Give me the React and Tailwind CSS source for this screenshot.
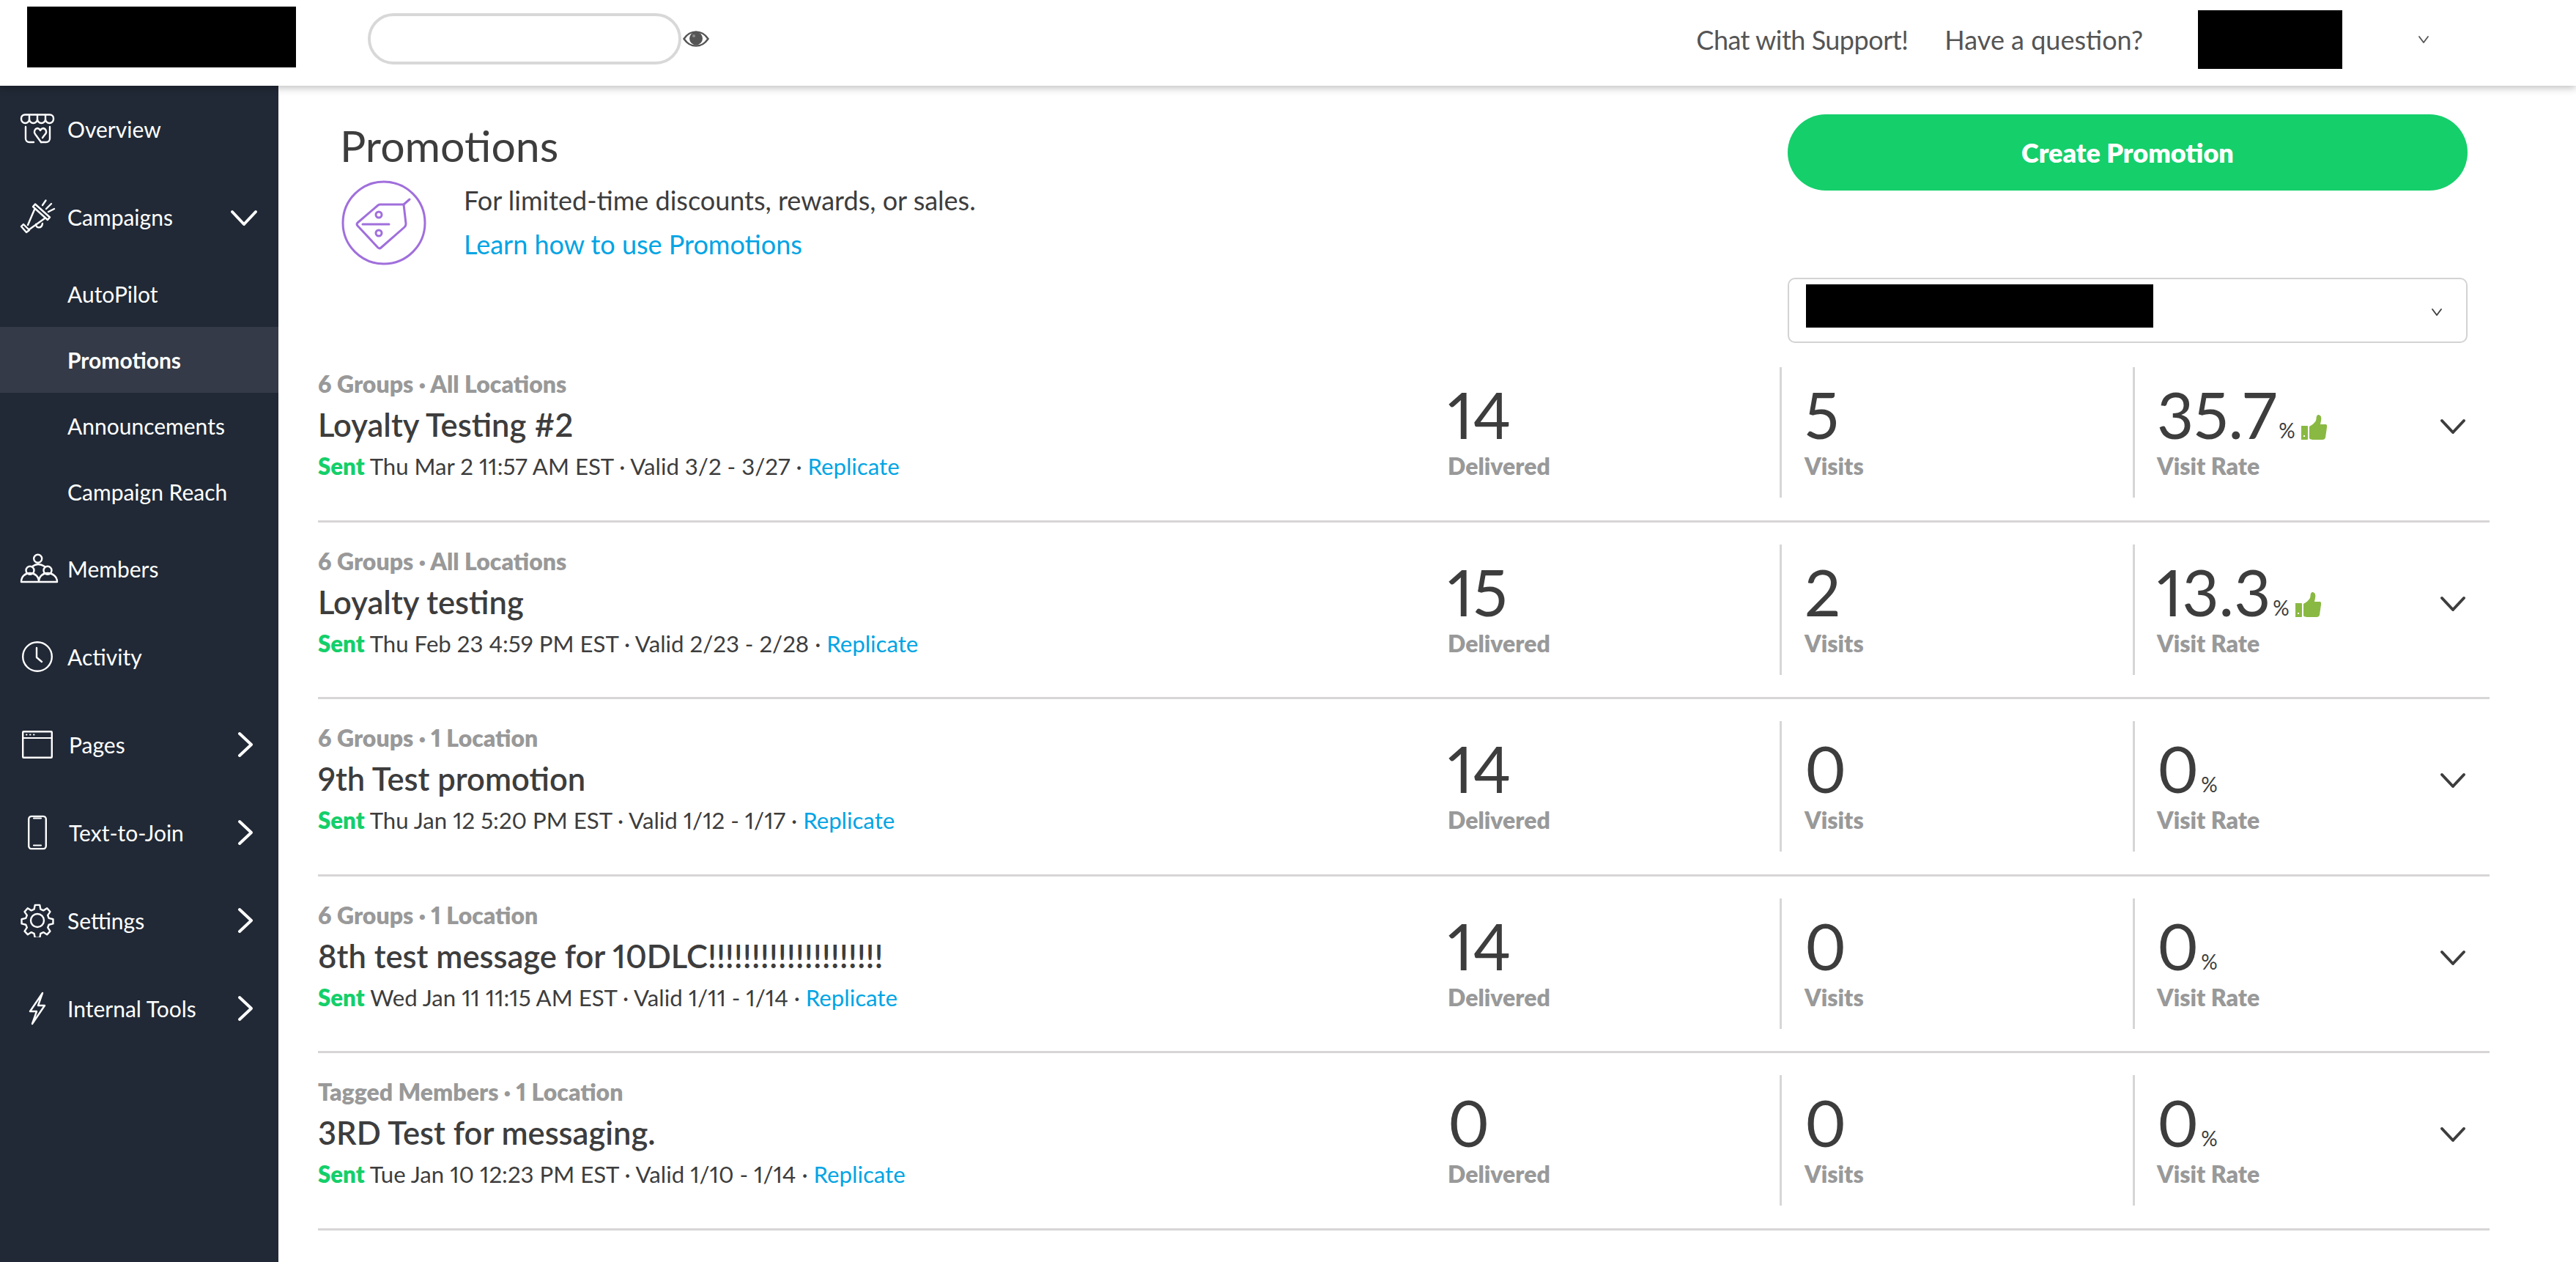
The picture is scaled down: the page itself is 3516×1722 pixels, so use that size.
import React from "react";

const Svg = ({ w, h, vb, children, cls = "" }) => (
  <svg width={w} height={h} viewBox={vb} fill="none" stroke="currentColor" strokeLinecap="round" strokeLinejoin="round" className={cls}>{children}</svg>
);

const icons = {
  overview: (
    <Svg w={70} h={60} vb="-4 1 70 60">
      <path strokeWidth="2.4" d="M14 11.500h34a5 5 0 0 1 5 5v1a5 5 0 0 1-11 0 5.500 5.500 0 0 1-11 0 5.500 5.500 0 0 1-11 0 5.500 5.500 0 0 1-11 0v-1a5 5 0 0 1 5-5z" />
      <path strokeWidth="2.4" d="M20 12v5M31 12v5M42 12v5" />
      <path strokeWidth="2.4" d="M15 28v16a5 5 0 0 0 5 5h6M48 28v16a5 5 0 0 1-5 5h-7" />
      <path strokeWidth="2.4" d="M36 49l-8-11a5 5 0 0 1 3-8 5 5 0 0 1 4 3 5 5 0 0 1 4-3 5 5 0 0 1 2 9l-3 4" />
    </Svg>
  ),
  megaphone: (
    <Svg w={70} h={60} vb="-4 1 70 60">
      <path strokeWidth="2.4" d="M25 17l3-3.500 20 18-3 3.500zM9 44l3-3 8 8-4 3z" />
      <path strokeWidth="2.400" d="M27 21l-9 21M41 33l-21 15M29 41c0 6 8 6 9-1" />
      <path strokeWidth="2.400" d="M38 15l4.500-6.500M43 20l7-7M46 24l8-4" />
    </Svg>
  ),
  members: (
    <Svg w={70} h={60} vb="-4 1 70 60">
      <circle cx="31.700" cy="17.300" r="5.500" strokeWidth="2.400" />
      <circle cx="21" cy="33.300" r="5.500" strokeWidth="2.400" />
      <circle cx="45" cy="33.300" r="5.500" strokeWidth="2.400" />
      <path strokeWidth="2.400" d="M9 49c0-8 6-12 12-12s12 4 12 12zM33 49c0-8 6-12 12-12s13 4 13 12zM24 28q8-6 17 0" />
    </Svg>
  ),
  clock: (
    <Svg w={42} h={42} vb="0 0 42 42">
      <circle cx="21" cy="21" r="19.800" strokeWidth="2.400" />
      <path strokeWidth="2.400" d="M20 9v13l7 6" />
    </Svg>
  ),
  pages: (
    <Svg w={42} h={38} vb="0 0 42 38">
      <rect x="1.200" y="1.200" width="39.600" height="35.600" rx="1" strokeWidth="2.400" />
      <path strokeWidth="2" d="M1.200 10h39.600" />
      <path strokeWidth="2" d="M6 5.500h.5M11 5.500h.5M16 5.500h.5" />
    </Svg>
  ),
  phone: (
    <Svg w={26} h={47} vb="0 0 26 47">
      <rect x="1.200" y="1.200" width="23.600" height="44.600" rx="4" strokeWidth="2.400" />
      <path strokeWidth="2.200" d="M8 4h10M8 41h10" />
    </Svg>
  ),
  gear: (
    <Svg w={46} h={46} vb="0 0 24 24">
      <path strokeWidth="1.250" d="M10.300 1.600h3.400l.6 3 2 .9 2.600-1.600 2.200 2.500-1.700 2.500.8 2.100 3 .7v3.200l-3 .7-.8 2 1.700 2.600-2.200 2.400-2.600-1.600-2 .9-.6 3h-3.400l-.6-3-2-.9-2.600 1.600-2.200-2.400 1.700-2.600-.8-2-3-.7v-3.200l3-.7.8-2.100-1.700-2.500 2.200-2.500 2.600 1.600 2-.9z" transform="translate(0 -.6)" />
      <circle cx="12" cy="12" r="4.700" strokeWidth="1.250" />
    </Svg>
  ),
  bolt: (
    <Svg w={24} h={46} vb="0 0 24 46">
      <path strokeWidth="2.400" d="M19 2L2 27h9L5 44l17-25h-9z" />
    </Svg>
  ),
};

const Right = () => (
  <Svg w={22} h={36} vb="0 0 22 36"><path strokeWidth="4" d="M3 3l16 15L3 33" /></Svg>
);

function NavItem({ icon, label, chevron, gap = "pl-[92px]" }) {
  return (
    <div className={`relative flex h-[120px] items-center text-[30px] text-white ${gap}`}>
      <span className="absolute left-[51px] top-1/2 flex -translate-x-1/2 -translate-y-1/2 items-center justify-center">{icon}</span>
      <span>{label}</span>
      {chevron === "right" && <span className="absolute left-[324px] top-[42px] flex"><Right /></span>}
      {chevron === "down" && (
        <span className="absolute left-[314px] top-[50px] flex">
          <Svg w={38} h={24} vb="0 0 38 24"><path strokeWidth="4" d="M3 3l16 17L35 3" /></Svg>
        </span>
      )}
    </div>
  );
}

function SubItem({ label, active }) {
  return (
    <div className={`flex h-[90px] items-center pl-[92px] text-[30px] text-white ${active ? "bg-[#343a47] font-bold" : ""}`}>{label}</div>
  );
}

const Thumb = () => (
  <svg width="35" height="35" viewBox="0 0 35 35" className="mb-[10px] ml-[8px]" fill="#8ab943">
    <path fillRule="evenodd" d="M0 15h8a1 1 0 0 1 1 1v17a1 1 0 0 1-1 1H0zM3 28h2v2H3z" />
    <path d="M11 16c4-2 7-5 9-8 1-3 0-7 3-8 4 0 5 4 4 8l-1 5h7c2 0 2.500 2 2 4l-2 14c-.5 2-2 3-4 3H16c-2 0-5-1-5-2z" />
  </svg>
);

const rows = [
  { meta: "6 Groups · All Locations", title: "Loyalty Testing #2", detail: "Thu Mar 2 11:57 AM EST · Valid 3/2 - 3/27 ·", d: "14", v: "5", r: "35.7", up: true },
  { meta: "6 Groups · All Locations", title: "Loyalty testing", detail: "Thu Feb 23 4:59 PM EST · Valid 2/23 - 2/28 ·", d: "15", v: "2", r: "13.3", up: true },
  { meta: "6 Groups · 1 Location", title: "9th Test promotion", detail: "Thu Jan 12 5:20 PM EST · Valid 1/12 - 1/17 ·", d: "14", v: "0", r: "0" },
  { meta: "6 Groups · 1 Location", title: "8th test message for 10DLC!!!!!!!!!!!!!!!!!!!!", detail: "Wed Jan 11 11:15 AM EST · Valid 1/11 - 1/14 ·", d: "14", v: "0", r: "0" },
  { meta: "Tagged Members · 1 Location", title: "3RD Test for messaging.", detail: "Tue Jan 10 12:23 PM EST · Valid 1/10 - 1/14 ·", d: "0", v: "0", r: "0" },
];

function Stat({ value, label, children, cls }) {
  return (
    <div className={`mt-[30px] h-[178px] self-start pt-[20px] ${cls}`}>
      <div className="flex h-[90px] items-end">
        <span className="text-[87px] leading-[90px] text-[#3d3d3d]">{value}</span>
        {children}
      </div>
      <div className="mt-[7px] h-[36px] text-[32px] leading-[36px] font-extrabold text-[#999999]">{label}</div>
    </div>
  );
}

function Row({ row }) {
  return (
    <div className="flex h-[241.5px] border-b-[3px] border-[#d8d5d6]">
      <div className="w-[1542px] pt-[35px]">
        <div className="h-[36px] text-[32px] leading-[36px] font-extrabold text-[#999999]">{row.meta}</div>
        <div className="mt-[12px] h-[50px] text-[43.5px] leading-[50px] font-semibold text-[#3d3d3d]">{row.title}</div>
        <div className="mt-[14px] h-[36px] text-[31.2px] leading-[36px] text-[#3d3d3d]">
          <span className="font-extrabold text-[#14cf6a]">Sent</span> {row.detail} <span className="text-[#00a4e4]">Replicate</span>
        </div>
      </div>
      <Stat value={row.d} label="Delivered" cls="w-[453px]" />
      <Stat value={row.v} label="Visits" cls="w-[482px] border-l-[3px] border-[#d8d5d6] pl-[31px]" />
      <div className="relative flex-1 self-start">
        <Stat value={row.r} label="Visit Rate" cls="border-l-[3px] border-[#d8d5d6] pl-[30px]">
          <span className="mb-[10px] ml-[3px] text-[28px] leading-[28px] text-[#3d3d3d]">%</span>
          {row.up && <Thumb />}
        </Stat>
        <span className="absolute right-[32px] top-[100px] flex text-[#3d3d3d]">
          <Svg w={36} h={22} vb="0 0 36 22"><path strokeWidth="4" d="M3 3l15 16L33 3" /></Svg>
        </span>
      </div>
    </div>
  );
}

export default function App() {
  return (
    <div className="flex h-[1722px] w-[3516px] flex-col overflow-hidden bg-white font-[Lato,sans-serif] proportional-nums">
      <header className="relative z-10 flex h-[117px] shrink-0 items-center bg-white pb-[10px] pl-[37px] pr-[200px] shadow-[0_3px_10px_rgba(0,0,0,0.25)]">
        <div className="mb-[6px] h-[83px] w-[367px] bg-black" />
        <div className="mb-[2px] ml-[98px] h-[70px] w-[428px] rounded-full border-[4px] border-[#d8d8d8]" />
        <svg width="36" height="22" viewBox="0 0 36 22" className="mb-[2px] ml-[2px]">
          <path d="M1.500 11C7 3 12 1.500 18 1.500S29 3 34.500 11C29 19 24 20.500 18 20.500S7 19 1.500 11z" fill="none" stroke="#555" strokeWidth="2.500" />
          <circle cx="18" cy="10.500" r="9" fill="#555" />
          <circle cx="15" cy="7" r="2" fill="#8c8c8c" />
        </svg>
        <div className="ml-auto flex items-center text-[36px] text-[#555555]">
          <span className="tracking-[-0.5px]">Chat with Support!</span>
          <span className="ml-[50px]">Have a question?</span>
          <div className="ml-[75px] h-[80px] w-[197px] bg-black" />
          <span className="ml-[103px] flex">
            <Svg w={16} h={10} vb="0 0 16 10"><path strokeWidth="1.800" d="M2 1l6 8 6-8" /></Svg>
          </span>
        </div>
      </header>
      <div className="flex flex-1">
        <nav className="w-[380px] shrink-0 bg-[#212936]">
          <div className="-mt-[1px]"><NavItem icon={icons.overview} label="Overview" /></div>
          <NavItem icon={icons.megaphone} label="Campaigns" chevron="down" />
          <SubItem label="AutoPilot" />
          <SubItem label="Promotions" active />
          <SubItem label="Announcements" />
          <SubItem label="Campaign Reach" />
          <NavItem icon={icons.members} label="Members" />
          <NavItem icon={icons.clock} label="Activity" />
          <NavItem icon={icons.pages} label="Pages" chevron="right" gap="pl-[94px]" />
          <NavItem icon={icons.phone} label="Text-to-Join" chevron="right" gap="pl-[94px]" />
          <NavItem icon={icons.gear} label="Settings" chevron="right" />
          <NavItem icon={icons.bolt} label="Internal Tools" chevron="right" />
        </nav>
        <main className="flex-1 pl-[54px] pr-[118px]">
          <div className="flex h-[354px] justify-between pl-[30px] pr-[30px]">
            <div className="pt-[52px]">
              <h1 className="text-[59px] leading-[60px] font-normal text-[#3d3d3d]">Promotions</h1>
              <div className="mt-[16px] flex items-center">
                <svg width="116" height="116" viewBox="0 0 116 116" fill="none" stroke="#a06fdc" strokeWidth="3" strokeLinecap="round" strokeLinejoin="round" className="ml-[2px]">
                  <circle cx="58" cy="58" r="56" />
                  <path d="M22 62a3 3 0 0 1 0-4l28-24a6 6 0 0 1 3-1h32l3 26a6 6 0 0 1-2 5L54 92a3 3 0 0 1-4 0z" />
                  <path d="M85 33l8-7M29 60h36" />
                  <circle cx="51" cy="47" r="4" />
                  <circle cx="51" cy="72" r="4" />
                </svg>
                <div className="-mt-[2px] ml-[51px] text-[36px] leading-[60px]">
                  <div className="text-[#3d3d3d]">For limited-time discounts, rewards, or sales.</div>
                  <div className="text-[#00a4e4]">Learn how to use Promotions</div>
                </div>
              </div>
            </div>
            <div className="w-[928px] pt-[39px]">
              <button className="flex h-[104px] w-full items-center justify-center rounded-full bg-[#15cf6b] text-[36px] font-extrabold text-white">Create Promotion</button>
              <div className="mt-[119px] flex h-[89px] items-start justify-between rounded-[10px] border-[2px] border-[#d4d2d3] pl-[23px] pr-[32px] pt-[7px]">
                <div className="h-[59px] w-[474px] bg-black" />
                <span className="mt-[33px] flex text-[#3d3d3d]">
                  <Svg w={16} h={10} vb="0 0 16 10"><path strokeWidth="1.800" d="M2 1l6 8 6-8" /></Svg>
                </span>
              </div>
            </div>
          </div>
          {rows.map((r) => <Row key={r.title} row={r} />)}
        </main>
      </div>
    </div>
  );
}
